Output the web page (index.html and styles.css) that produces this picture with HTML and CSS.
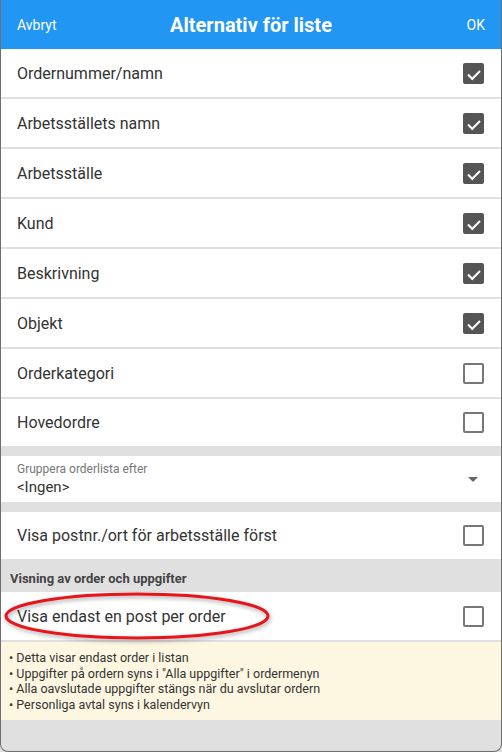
FILE: index.html
```html
<!DOCTYPE html>
<html lang="sv">

<head>
    <meta charset="UTF-8">
    <meta name="viewport" content="width=device-width, initial-scale=1.0">
    <title>Alternativ för liste</title>
    <link rel="stylesheet" href="styles.css">
</head>

<body>
    <div class="frame">
        <div class="header">
            <span class="header-btn">Avbryt</span>
            <span class="header-title">Alternativ för liste</span>
            <span class="header-btn right">OK</span>
        </div>

        <div class="list">
            <div class="row"><span>Ordernummer/namn</span><span class="check on"></span></div>
            <div class="row"><span>Arbetsställets namn</span><span class="check on"></span></div>
            <div class="row"><span>Arbetsställe</span><span class="check on"></span></div>
            <div class="row"><span>Kund</span><span class="check on"></span></div>
            <div class="row"><span>Beskrivning</span><span class="check on"></span></div>
            <div class="row"><span>Objekt</span><span class="check on"></span></div>
            <div class="row"><span>Orderkategori</span><span class="check"></span></div>
            <div class="row last"><span>Hovedordre</span><span class="check"></span></div>
        </div>

        <div class="gap"></div>

        <div class="select">
            <div>
                <div class="select-label">Gruppera orderlista efter</div>
                <div class="select-value">&lt;Ingen&gt;</div>
            </div>
            <span class="caret"></span>
        </div>

        <div class="gap"></div>

        <div class="row last"><span>Visa postnr./ort för arbetsställe först</span><span class="check"></span></div>

        <div class="section">Visning av order och uppgifter</div>

        <div class="row marked">
            <span>Visa endast en post per order</span><span class="check"></span>
            <!-- red marker drawn over the row -->
            <svg class="ring" width="272" height="52" viewBox="0 0 272 52">
                <ellipse cx="135" cy="26" rx="131" ry="22" fill="none" stroke="#e8141b" stroke-width="3" />
            </svg>
        </div>

        <div class="notes">
            <div>• Detta visar endast order i listan</div>
            <div>• Uppgifter på ordern syns i "Alla uppgifter" i ordermenyn</div>
            <div>• Alla oavslutade uppgifter stängs när du avslutar ordern</div>
            <div>• Personliga avtal syns i kalendervyn</div>
        </div>
    </div>
</body>

</html>
```

FILE: styles.css
```css
body {
    margin: 0;
    font-family: Roboto, "Liberation Sans", sans-serif;
    background-color: #e0e0e0;
}

.frame {
    height: 752px;
    box-sizing: border-box;
    border: 1px solid #6e6e6e;
    border-top: none;
    border-radius: 0 0 8px 8px;
    background-color: #e0e0e0;
    overflow: hidden;
}

.header {
    display: flex;
    align-items: center;
    height: 49px;
    padding: 0 16px;
    background-color: #2196f3;
    color: white;
}

.header-btn {
    flex: 1;
    font-size: 14px;
}

.header-btn.right {
    text-align: right;
}

.header-title {
    font-size: 20px;
    font-weight: bold;
}

.row {
    display: flex;
    justify-content: space-between;
    align-items: center;
    height: 48px;
    padding: 0 17px 0 16px;
    background-color: white;
    border-bottom: 2px solid #e0e0e0;
    font-size: 16px;
    color: #333;
}

.row.last {
    height: 47px;
    border-bottom: none;
}

.check {
    width: 17px;
    height: 17px;
    border: 2px solid #777;
    border-radius: 2px;
    position: relative;
}

.check.on {
    background-color: #555;
    border-color: #555;
}

.check.on::after {
    content: "";
    position: absolute;
    left: 3px;
    top: 5px;
    width: 10px;
    height: 5px;
    border-left: 2px solid white;
    border-bottom: 2px solid white;
    transform: rotate(-45deg);
}

.gap {
    height: 10px;
}

.select {
    display: flex;
    justify-content: space-between;
    align-items: center;
    height: 46px;
    padding: 0 23px 0 16px;
    background-color: white;
}

.select-label {
    font-size: 12px;
    color: #777;
    margin-bottom: 2px;
}

.select-value {
    font-size: 15px;
    color: #333;
}

.caret {
    width: 0;
    height: 0;
    border-left: 5px solid transparent;
    border-right: 5px solid transparent;
    border-top: 5px solid #666;
}

.section {
    height: 32px;
    line-height: 38px;
    padding-left: 9px;
    font-size: 13px;
    font-weight: bold;
    color: #444;
    background-color: #e0e0e0;
    border-top: 1px solid #e0e0e0;
}

.marked {
    position: relative;
}

.ring {
    position: absolute;
    left: 1px;
    top: -2px;
    filter: drop-shadow(1px 2px 2px rgba(0, 0, 0, 0.35));
}

.notes {
    height: 78px;
    box-sizing: border-box;
    padding: 8px 8px;
    background-color: #fdf7e2;
    font-size: 12.5px;
    line-height: 15.5px;
    color: #333;
}
```
